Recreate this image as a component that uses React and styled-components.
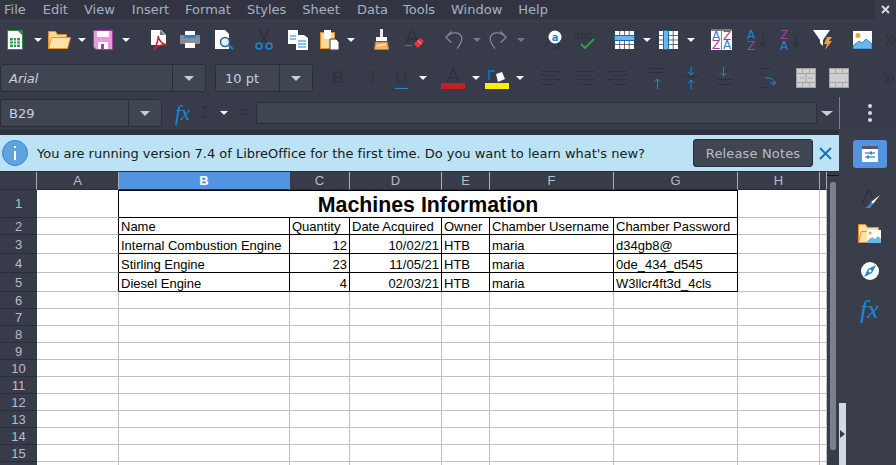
import React from 'react'
import styled, { createGlobalStyle } from 'styled-components'

const GlobalStyle = createGlobalStyle`
    html, body {
        margin: 0;
        padding: 0;
        background: #383c4a;
    }
    body {
        width: 896px;
        height: 465px;
        overflow: hidden;
        font-family: "DejaVu Sans", sans-serif;
    }
`

const Page = styled.div`
    display: flex;
    flex-direction: column;
    width: 896px;
    height: 465px;
    overflow: hidden;
    background: #383c4a;
    color: #c5ccd6;
`

const MenuBar = styled.div`
    display: flex;
    align-items: center;
    height: 19px;
    flex: none;
    background: #323541;
    padding-left: 4px;
`

const MenuItem = styled.span`
    font-size: 13px;
    color: #a3b1c4;
    margin-right: ${p => p.$gap}px;
`

const CloseDoc = styled.div`
    margin-left: auto;
    width: 21px;
    height: 19px;
    display: flex;
    align-items: center;
    justify-content: center;
    background: #383c4a;
`

const Toolbar = styled.div`
    display: flex;
    align-items: center;
    flex: none;
    height: ${p => p.$h}px;
    background: #383c4a;
`

const Tool = styled.span`
    display: flex;
    flex: none;
    align-items: center;
    justify-content: center;
    margin-left: ${p => p.$gap || 0}px;
    width: ${p => p.$w}px;
`

const DropArrow = styled.span`
    flex: none;
    display: block;
    margin-left: ${p => p.$gap || 0}px;
    width: 0;
    height: 0;
    border-left: ${p => (p.$big ? 6 : 4)}px solid transparent;
    border-right: ${p => (p.$big ? 6 : 4)}px solid transparent;
    border-top: ${p => (p.$big ? 5 : 4)}px solid ${p => (p.$dim ? '#747985' : p.$big ? '#c8ccd4' : '#f2f4f7')};
`

const Combo = styled.div`
    display: flex;
    flex: none;
    box-sizing: border-box;
    width: ${p => p.$w}px;
    height: 28px;
    margin-left: ${p => p.$gap || 0}px;
    background: #404552;
    border: 1px solid #2b2e39;
    border-radius: 3px;
`

const ComboText = styled.span`
    flex: 1;
    display: flex;
    align-items: center;
    padding-left: ${p => p.$pad}px;
    font-size: 13px;
    font-style: ${p => (p.$italic ? 'italic' : 'normal')};
    color: #c8d0da;
`

const ComboButton = styled.span`
    display: flex;
    flex: none;
    align-items: center;
    justify-content: center;
    width: 32px;
    border-left: 1px solid #2b2e39;
`

const ComboArrow = styled.span`
    width: 0;
    height: 0;
    border-left: 5px solid transparent;
    border-right: 5px solid transparent;
    border-top: 5px solid #c8ccd4;
`

const DarkGlyph = styled.span`
    flex: none;
    display: block;
    width: ${p => p.$w}px;
    margin-left: ${p => p.$gap || 0}px;
    text-align: center;
    font-family: "Liberation Sans", sans-serif;
    font-size: 17px;
    font-weight: ${p => (p.$bold ? 700 : 400)};
    font-style: ${p => (p.$italic ? 'italic' : 'normal')};
    color: #30333f;
    ${p => p.$under && 'border-bottom: 1px solid #1f86d3;'}
`

const FormulaInput = styled.div`
    flex: none;
    box-sizing: border-box;
    width: 561px;
    height: 22px;
    margin-left: 6px;
    background: #404552;
    border: 1px solid #2b2e39;
    border-radius: 2px;
`

const VSep = styled.span`
    flex: none;
    width: 1px;
    height: 32px;
    margin-left: 6px;
    background: #7d828e;
`

const Kebab = styled.span`
    flex: none;
    display: flex;
    flex-direction: column;
    gap: 3px;
    margin-left: 28px;
    i {
        display: block;
        width: 4px;
        height: 4px;
        border-radius: 50%;
        background: #d3dae3;
    }
`

const Workspace = styled.div`
    flex: 1;
    display: flex;
    min-height: 0;
`

const Main = styled.div`
    flex: none;
    width: 839px;
    display: flex;
    flex-direction: column;
    padding-top: 5px;
    box-sizing: border-box;
    background: #2f323d;
`

const InfoBar = styled.div`
    flex: none;
    display: flex;
    align-items: center;
    height: 36px;
    background: #bce3f5;
    padding-left: 2px;
`

const InfoText = styled.span`
    margin-left: 9px;
    font-size: 13px;
    letter-spacing: -0.01px;
    color: #17191e;
    white-space: nowrap;
`

const ReleaseButton = styled.button`
    box-sizing: border-box;
    width: 120px;
    height: 28px;
    margin-left: auto;
    padding: 0;
    background: #404552;
    border: 1px solid #2b2e39;
    border-radius: 3px;
    color: #b7bdc7;
    font-family: "DejaVu Sans", sans-serif;
    font-size: 13px;
    letter-spacing: 0.15px;
`

const InfoClose = styled.span`
    display: flex;
    justify-content: center;
    width: 25px;
    margin-right: 1px;
`

const SheetArea = styled.div`
    flex: 1;
    display: flex;
    min-height: 0;
    margin-top: 1px;
`

const Sheet = styled.div`
    flex: none;
    display: grid;
    width: 827px;
    grid-template-columns: 37px 82px 171px 60px 92px 48px 124px 124px 82px 7px;
    grid-template-rows: 18px 28px 17px 19px 19px 19px repeat(11, 17px);
    overflow: hidden;
    font-family: "Liberation Sans", sans-serif;
    font-size: 13px;
    background: #fff;
`

const ColHead = styled.div`
    display: flex;
    align-items: center;
    justify-content: center;
    box-sizing: border-box;
    background: ${p => (p.$active ? '#5294e2' : '#383c4a')};
    color: ${p => (p.$active ? '#fff' : '#b6bcc6')};
    font-weight: ${p => (p.$active ? 700 : 400)};
    border-right: 1px solid ${p => (p.$active ? '#5294e2' : '#a9adb6')};
    border-bottom: 1px solid #2b2e39;
`

const RowHead = styled.div`
    display: flex;
    align-items: center;
    justify-content: center;
    box-sizing: border-box;
    background: #383c4a;
    color: #b6bcc6;
    border-bottom: 1px solid #2b2e39;
`

const Cell = styled.div`
    box-sizing: border-box;
    display: flex;
    align-items: flex-end;
    justify-content: ${p => (p.$num ? 'flex-end' : 'flex-start')};
    padding: 0 2px;
    line-height: 14px;
    white-space: nowrap;
    overflow: hidden;
    color: #000;
    border-right: 1px solid ${p => (p.$edge ? '#000' : '#c0c0c0')};
    border-bottom: 1px solid ${p => (p.$table ? '#000' : '#c0c0c0')};
`

const TitleCell = styled(Cell)`
    grid-column: span 6;
    align-items: center;
    justify-content: center;
    font-size: 21.33px;
    line-height: 26px;
    font-weight: 700;
    border-top: 1px solid #000;
    padding: 2px 0 0;
`

const ScrollBar = styled.div`
    flex: none;
    width: 12px;
    display: flex;
    flex-direction: column;
    align-items: center;
    background: #383c4a;
`

const ScrollMark = styled.span`
    display: block;
    width: 12px;
    height: 1px;
    margin-top: 3px;
    background: #14161b;
`

const ScrollThumb = styled.span`
    display: block;
    width: 6px;
    height: 268px;
    margin-top: 6px;
    border-radius: 2px;
    background: #7b808c;
`

const Sidebar = styled.div`
    position: relative;
    flex: 1;
    display: flex;
    flex-direction: column;
    align-items: center;
    padding-top: 10px;
    padding-left: 4px;
    background: #3a3e4b;
`

const SideButton = styled.span`
    display: flex;
    flex: none;
    align-items: center;
    justify-content: center;
    width: 34px;
    height: 28px;
    margin-top: ${p => p.$gap || 0}px;
    border-radius: 3px;
    background: ${p => (p.$active ? '#5294e2' : 'transparent')};
`

const Grip = styled.div`
    position: absolute;
    left: 0;
    top: 273px;
    width: 7px;
    height: 62px;
    display: flex;
    align-items: center;
    justify-content: center;
    background: #d3dae3;
    &::after {
        content: '';
        border-top: 4px solid transparent;
        border-bottom: 4px solid transparent;
        border-left: 5px solid #383c4a;
    }
`

const dark = '#2e313c'
const blue = '#1f86d3'
const purple = '#a33ea1'

const Ico = ({ w, h, children }) => (
    <svg width={w} height={h} viewBox={`0 0 ${w} ${h}`}>{children}</svg>
)

const Lines = ({ w, rows, color = dark }) => (
    <Ico w={w} h={16}>
        {rows.map((r, i) => (
            <rect key={i} x={r[0]} y={r[1]} width={r[2]} height="1" fill={color} />
        ))}
    </Ico>
)

const NewSheet = () => (
    <Ico w={16} h={20}>
        <path d="M.5.5h11l4 4v15H.5z" fill="#fff" stroke="#2e8b3e" />
        <path d="M10 0h6v6z" fill="#2e8b3e" />
        <path d="M3 8h10v9H3z" fill="#2e9a4b" />
        <path d="M3 11h10M3 14h10M6.5 8v9M9.5 8v9" stroke="#fff" />
    </Ico>
)

const OpenFolder = () => (
    <Ico w={23} h={19}>
        <path d="M.5 18V1.5h7l2 3h9v3" fill="#fdd88f" stroke="#ef8f2c" />
        <path d="M.5 18.5l3-11h19l-3 11z" fill="#fde3a7" stroke="#ef8f2c" />
    </Ico>
)

const SaveIcon = () => (
    <Ico w={20} h={20}>
        <path d="M.5.5h19v19H3L.5 17z" fill="#e79bdd" stroke={purple} />
        <rect x="4" y="1" width="12" height="6" fill="#fff" />
        <rect x="5" y="12" width="10" height="7" fill="#fff" />
        <rect x="8" y="14" width="3" height="5" fill={purple} />
    </Ico>
)

const PdfIcon = () => (
    <Ico w={18} h={20}>
        <path d="M1 0h10l5 5v10H1z" fill="#fff" />
        <path d="M10 0l5 5h-5z" fill="#777" />
        <path d="M8 6c1 4 3 8 9 9-5-1-11 1-13 5 2-5 5-9 4-14z" fill="none" stroke="#c0272d" strokeWidth="1.5" />
    </Ico>
)

const PrintIcon = () => (
    <Ico w={20} h={17}>
        <rect x="5" y="0" width="10" height="5" fill="#fff" />
        <rect x="0" y="4" width="20" height="9" rx="1" fill="#8a8d93" />
        <rect x="4" y="4" width="12" height="3" fill="#1f86d3" />
        <rect x="5" y="12" width="10" height="5" fill="#fff" />
    </Ico>
)

const PreviewIcon = () => (
    <Ico w={19} h={20}>
        <path d="M0 0h10l4 4v15H0z" fill="#fff" />
        <circle cx="10" cy="12" r="4.5" fill="#dff0fb" stroke="#2b5f8a" strokeWidth="1.5" />
        <path d="M13 15l5 4" stroke={blue} strokeWidth="2" />
    </Ico>
)

const CutIcon = () => (
    <Ico w={18} h={20}>
        <path d="M4 0l8 13M14 0L6 13" stroke={dark} strokeWidth="1.5" fill="none" />
        <circle cx="4" cy="16" r="3" fill="none" stroke={blue} strokeWidth="1.5" />
        <circle cx="14" cy="16" r="3" fill="none" stroke={blue} strokeWidth="1.5" />
    </Ico>
)

const CopyIcon = () => (
    <Ico w={20} h={20}>
        <path d="M0 0h10v14H0z" fill="#fff" />
        <path d="M2 6h6M2 9h6" stroke={blue} />
        <path d="M8 5h8l4 3v12H8z" fill="#fff" />
        <path d="M10 11h8M10 14h8M10 17h8" stroke={blue} />
    </Ico>
)

const PasteIcon = () => (
    <Ico w={19} h={20}>
        <path d="M.5 2.5h14v16H.5z" fill="#fdd88f" stroke="#ef8f2c" strokeWidth="1" />
        <rect x="4" y="0" width="7" height="4" fill="#fff" />
        <path d="M4 3h7v6H4z" fill="#fff" />
        <path d="M10 9h6l3 3v8h-9z" fill="#fff" stroke="#383c4a" />
    </Ico>
)

const BrushIcon = () => (
    <Ico w={15} h={21}>
        <rect x="6" y="0" width="3" height="9" fill="#e9e9e9" />
        <rect x="2" y="8" width="11" height="4" fill="#fff" />
        <path d="M1.5 13h12l1 7.5H.5z" fill="#f6b26b" stroke="#d9701e" />
        <path d="M3 17l9-2" stroke="#fff" />
    </Ico>
)

const ClearIcon = () => (
    <Ico w={19} h={18}>
        <path d="M1 12L6 0h2l5 12M3 8h8" stroke={dark} strokeWidth="1.5" fill="none" />
        <rect x="0" y="14" width="7" height="1" fill={blue} />
        <path d="M9 13l6-6 4 3-6 7z" fill="#e5383b" />
        <path d="M12.500 9.500l4 3.500" stroke="#ffb3b3" />
    </Ico>
)

const UndoIcon = ({ flip }) => (
    <Ico w={18} h={18}>
        <g transform={flip ? 'translate(18 0) scale(-1 1)' : undefined}>
            <path d="M6.500 .5L.8 6.500l5.700 5M.8 6.500C5 2 11 0 15 3.500c3.500 3 2.500 7-3 14" fill="none" stroke="#878c98" strokeWidth="1.200" />
        </g>
    </Ico>
)

const FindIcon = () => (
    <Ico w={20} h={19}>
        <circle cx="13" cy="7" r="6.5" fill="#fff" />
        <text x="13" y="11" textAnchor="middle" fontFamily="DejaVu Sans" fontSize="10" fontWeight="700" fill={blue}>a</text>
        <path d="M8 11l-7 7M17 14v4h-5" stroke={dark} strokeWidth="1.300" fill="none" />
    </Ico>
)

const SpellIcon = () => (
    <Ico w={23} h={20}>
        <text x="0" y="9" fontFamily="DejaVu Sans" fontSize="10" fill={dark}>abc</text>
        <path d="M7 14l4 4 9-9" fill="none" stroke="#28a745" strokeWidth="1.800" />
    </Ico>
)

const GridIcon = ({ col }) => (
    <Ico w={21} h={20}>
        <rect x="1" y="1" width="19" height="18" fill="#fff" />
        <path d="M1 5.500h19M1 10h19M1 14.500h19M5.700 1v18M10.500 1v18M15.200 1v18" stroke="#2f323d" strokeWidth=".7" />
        {col
            ? <rect x="5.500" y="0.500" width="5" height="19" fill="#6fb6e8" stroke="#0f6cb5" />
            : <rect x="0.500" y="5.500" width="20" height="5" fill="#6fb6e8" stroke="#0f6cb5" />}
    </Ico>
)

const sortText = { fontFamily: 'DejaVu Sans', fontSize: 12, textAnchor: 'middle' }

const SortPage = () => (
    <Ico w={21} h={21}>
        <rect x="0" y="0" width="21" height="2" fill="#7a7a70" />
        <rect x="0" y="2" width="21" height="19" fill="#fff" />
        <rect x="10" y="2" width="1" height="19" fill="#888" />
        <text x="5" y="11" {...sortText} fill={blue}>A</text>
        <text x="5" y="20" {...sortText} fill={purple}>Z</text>
        <text x="16" y="11" {...sortText} fill={purple}>Z</text>
        <text x="16" y="20" {...sortText} fill={blue}>A</text>
    </Ico>
)

const SortIcon = ({ down }) => (
    <Ico w={25} h={22}>
        <text x="6" y="10" {...sortText} fill={down ? purple : blue}>{down ? 'Z' : 'A'}</text>
        <text x="6" y="21" {...sortText} fill={down ? blue : purple}>{down ? 'A' : 'Z'}</text>
        <path d="M18 6v11M15 14l3 3 3-3" stroke={dark} strokeWidth="1.200" fill="none" />
    </Ico>
)

const FilterIcon = () => (
    <Ico w={19} h={20}>
        <path d="M0 0h17L10 10v6l-3-3V10z" fill="#fff" />
        <path d="M14 7h5l-3 4h3l-7 9 2-6h-3z" fill="#f0a03c" />
    </Ico>
)

const ImageIcon = () => (
    <Ico w={19} h={18}>
        <rect x="0" y="0" width="19" height="18" fill="#fff" />
        <circle cx="5" cy="4.500" r="2.500" fill="#f0a03c" />
        <path d="M0 15l6-5 3 2 4-4 6 5v5H0z" fill="#6fb6e8" stroke={blue} />
    </Ico>
)

const More = () => (
    <Ico w={11} h={12}>
        <path d="M1 1l5 5-5 5M6 1l5 5-5 5" fill="none" stroke={dark} strokeWidth="1.400" />
    </Ico>
)

const ColorA = ({ color }) => (
    <Ico w={24} h={21}>
        <path d="M6 15L12 1l6 14M8 10h8" stroke={dark} strokeWidth="1.500" fill="none" />
        <rect x="0" y="15" width="24" height="6" fill={color} />
    </Ico>
)

const Highlight = () => (
    <Ico w={24} h={21}>
        <path d="M4 12V3h6" stroke="#0f6cb5" strokeWidth="2" fill="none" />
        <path d="M11 6l6-2 3 7-7 3z" fill="#fff" />
        <path d="M14 1l3 3" stroke="#383c4a" />
        <rect x="0" y="15" width="24" height="6" fill="#ffee00" />
    </Ico>
)

const ArrowUp = ({ x, y, h }) => <path d={`M${x} ${y}v${h}M${x - 3} ${y + 3}l3 -3 3 3`} stroke={blue} strokeWidth="1" fill="none" />
const ArrowDown = ({ x, y, h }) => <path d={`M${x} ${y}v${h}M${x - 3} ${y + h - 3}l3 3 3 -3`} stroke={blue} strokeWidth="1" fill="none" />

const TableGrey = ({ split }) => (
    <Ico w={20} h={20}>
        <rect x=".5" y=".5" width="19" height="19" fill="#cfcfcf" stroke="#a0a0a0" />
        <path d="M0 5.500h20M0 14.500h20" stroke="#a6a6a6" />
        <path d="M6.500 0v5M13.500 0v5M6.500 15v5M13.500 15v5" stroke="#a6a6a6" />
        {!split && <path d="M4 10h4M12 10h4M10 6v8" stroke="#a6a6a6" />}
    </Ico>
)

const SideProps = () => (
    <Ico w={16} h={16}>
        <rect x="0" y="0" width="16" height="16" fill="#fff" />
        <rect x="0" y="0" width="16" height="3" fill="#55585f" />
        <path d="M3 7h10M3 11h10" stroke="#1a5d96" />
        <rect x="8" y="5.500" width="2" height="3" fill={blue} />
        <rect x="5" y="9.500" width="2" height="3" fill={blue} />
    </Ico>
)

const SideStyles = () => (
    <Ico w={20} h={20}>
        <path d="M1 17L8 2h2l2 7" stroke={dark} strokeWidth="1.500" fill="none" />
        <path d="M20 6L11 13l2 2z" fill="#fff" />
        <path d="M11 13l2 2-3 4H5c3-1 4-3 6-6z" fill="#2f8fdc" />
    </Ico>
)

const SideGallery = () => (
    <Ico w={23} h={19}>
        <path d="M.5 18V.5h7l2 3h11v3" fill="#fde3a7" stroke="#ef8f2c" />
        <path d="M.5 18.500l3-11h19l-3 11z" fill="#fde3a7" stroke="#ef8f2c" />
        <rect x="9" y="6" width="14" height="13" fill="#fff" />
        <circle cx="12" cy="9" r="1.500" fill="#f0a03c" />
        <path d="M9 17l5-4 3 2 3-3 3 3v4H9z" fill="#6fb6e8" />
    </Ico>
)

const SideNavigator = () => (
    <Ico w={18} h={18}>
        <circle cx="9" cy="9" r="9" fill="#fff" />
        <path d="M15 3L11 11 3 15l4-8z" fill={blue} />
        <circle cx="9" cy="9" r="1.500" fill="#fff" />
    </Ico>
)

const Fx = styled.span`
    flex: none;
    font-family: "Liberation Serif", serif;
    font-style: italic;
    font-size: ${p => p.$size}px;
    line-height: 1;
    color: #1f86d3;
    margin-left: ${p => p.$gap || 0}px;
`

const columns = ['A', 'B', 'C', 'D', 'E', 'F', 'G', 'H']

const rows = [
    ['Name', 'Quantity', 'Date Acquired', 'Owner', 'Chamber Username', 'Chamber Password'],
    ['Internal Combustion Engine', '12', '10/02/21', 'HTB', 'maria', 'd34gb8@'],
    ['Stirling Engine', '23', '11/05/21', 'HTB', 'maria', '0de_434_d545'],
    ['Diesel Engine', '4', '02/03/21', 'HTB', 'maria', 'W3llcr4ft3d_4cls'],
]

const emptyRows = [6, 7, 8, 9, 10, 11, 12, 13, 14, 15, 16]

function MainToolbar() {
    return (
        <Toolbar $h={41}>
            <Tool $gap={7} $w={16}><NewSheet /></Tool>
            <DropArrow $gap={11} />
            <Tool $gap={6} $w={23}><OpenFolder /></Tool>
            <DropArrow $gap={7} />
            <Tool $gap={7} $w={20}><SaveIcon /></Tool>
            <DropArrow $gap={9} />
            <Tool $gap={20} $w={18}><PdfIcon /></Tool>
            <Tool $gap={12} $w={20}><PrintIcon /></Tool>
            <Tool $gap={15} $w={19}><PreviewIcon /></Tool>
            <Tool $gap={21} $w={18}><CutIcon /></Tool>
            <Tool $gap={15} $w={20}><CopyIcon /></Tool>
            <Tool $gap={12} $w={19}><PasteIcon /></Tool>
            <DropArrow $gap={8} />
            <Tool $gap={19} $w={15}><BrushIcon /></Tool>
            <Tool $gap={16} $w={19}><ClearIcon /></Tool>
            <Tool $gap={21} $w={18}><UndoIcon /></Tool>
            <DropArrow $gap={10} $dim />
            <Tool $gap={8} $w={18}><UndoIcon flip /></Tool>
            <DropArrow $gap={10} $dim />
            <Tool $gap={17} $w={20}><FindIcon /></Tool>
            <Tool $gap={12} $w={23}><SpellIcon /></Tool>
            <Tool $gap={17} $w={21}><GridIcon /></Tool>
            <DropArrow $gap={8} />
            <Tool $gap={7} $w={21}><GridIcon col /></Tool>
            <DropArrow $gap={8} />
            <Tool $gap={16} $w={21}><SortPage /></Tool>
            <Tool $gap={13} $w={25}><SortIcon /></Tool>
            <Tool $gap={8} $w={25}><SortIcon down /></Tool>
            <Tool $gap={10} $w={19}><FilterIcon /></Tool>
            <Tool $gap={21} $w={19}><ImageIcon /></Tool>
            <Tool $gap={13} $w={11}><More /></Tool>
        </Toolbar>
    )
}

function FormatToolbar() {
    return (
        <Toolbar $h={36}>
            <Combo $w={206}>
                <ComboText $pad={8} $italic>Arial</ComboText>
                <ComboButton><ComboArrow /></ComboButton>
            </Combo>
            <Combo $w={98} $gap={9}>
                <ComboText $pad={9}>10 pt</ComboText>
                <ComboButton><ComboArrow /></ComboButton>
            </Combo>
            <DarkGlyph $gap={17} $w={16} $bold>B</DarkGlyph>
            <DarkGlyph $gap={22} $w={8} $italic>I</DarkGlyph>
            <DarkGlyph $gap={19} $w={13} $under>U</DarkGlyph>
            <DropArrow $gap={11} />
            <Tool $gap={14} $w={24}><ColorA color="#c4201f" /></Tool>
            <DropArrow $gap={7} />
            <Tool $gap={5} $w={24}><Highlight /></Tool>
            <DropArrow $gap={7} />
            <Tool $gap={17} $w={20}><Lines w={20} rows={[[0, 1, 20], [0, 5, 14], [0, 9, 20], [0, 14, 14]]} /></Tool>
            <Tool $gap={14} $w={20}><Lines w={20} rows={[[0, 1, 20], [3, 5, 14], [0, 9, 20], [3, 14, 14]]} /></Tool>
            <Tool $gap={12} $w={20}><Lines w={20} rows={[[0, 1, 20], [6, 5, 14], [0, 9, 20], [6, 14, 14]]} /></Tool>
            <Tool $gap={22} $w={17}>
                <Ico w={17} h={22}><path d="M0 1.500h17M0 5.500h17" stroke={dark} /><ArrowUp x={8.5} y={12} h={10} /></Ico>
            </Tool>
            <Tool $gap={16} $w={18}>
                <Ico w={18} h={22}><path d="M0 9.500h18" stroke={dark} /><ArrowDown x={9} y={0} h={8} /><ArrowUp x={9} y={13} h={9} /></Ico>
            </Tool>
            <Tool $gap={16} $w={17}>
                <Ico w={17} h={22}><path d="M0 12.500h17M0 17.500h17" stroke={dark} /><ArrowDown x={7.5} y={0} h={9} /></Ico>
            </Tool>
            <Tool $gap={25} $w={18}>
                <Ico w={18} h={22}>
                    <path d="M0 1.500h14M0 7.500h6M0 20.500h10" stroke={dark} />
                    <path d="M7 11c6 0 8 0 9 6M12 15l4 3 2-4" stroke={blue} strokeWidth="1" fill="none" />
                </Ico>
            </Tool>
            <Tool $gap={20} $w={20}><TableGrey /></Tool>
            <Tool $gap={13} $w={20}><TableGrey split /></Tool>
            <Tool $gap={34} $w={11}><More /></Tool>
        </Toolbar>
    )
}

function FormulaBar() {
    return (
        <Toolbar $h={34}>
            <Combo $w={162}>
                <ComboText $pad={8}>B29</ComboText>
                <ComboButton><ComboArrow /></ComboButton>
            </Combo>
            <Fx $size={21} $gap={13}>fx</Fx>
            <DarkGlyph $gap={9} $w={13}>Σ</DarkGlyph>
            <DropArrow $gap={8} />
            <DarkGlyph $gap={8} $w={14} $bold>=</DarkGlyph>
            <FormulaInput />
            <DropArrow $gap={4} $big />
            <VSep />
            <Kebab><i /><i /><i /></Kebab>
        </Toolbar>
    )
}

export default function App() {
    return (
        <Page>
            <GlobalStyle />
            <MenuBar>
                <MenuItem $gap={17}>File</MenuItem>
                <MenuItem $gap={16}>Edit</MenuItem>
                <MenuItem $gap={17}>View</MenuItem>
                <MenuItem $gap={16}>Insert</MenuItem>
                <MenuItem $gap={16}>Format</MenuItem>
                <MenuItem $gap={16}>Styles</MenuItem>
                <MenuItem $gap={17}>Sheet</MenuItem>
                <MenuItem $gap={15}>Data</MenuItem>
                <MenuItem $gap={16}>Tools</MenuItem>
                <MenuItem $gap={16}>Window</MenuItem>
                <MenuItem $gap={0}>Help</MenuItem>
                <CloseDoc>
                    <Ico w={9} h={9}><path d="M1 1l7 7M8 1L1 8" stroke="#d3dae3" strokeWidth="2" /></Ico>
                </CloseDoc>
            </MenuBar>
            <MainToolbar />
            <FormatToolbar />
            <FormulaBar />
            <Workspace>
                <Main>
                    <InfoBar>
                        <Ico w={26} h={26}>
                            <circle cx="13" cy="13" r="12.500" fill="#5ea5e0" stroke="#3b82c4" />
                            <rect x="12" y="11" width="2" height="9" fill="#fff" />
                            <rect x="12" y="6" width="2" height="2" fill="#fff" />
                        </Ico>
                        <InfoText>You are running version 7.4 of LibreOffice for the first time. Do you want to learn what's new?</InfoText>
                        <ReleaseButton>Release Notes</ReleaseButton>
                        <InfoClose>
                            <Ico w={13} h={13}><path d="M1 1l11 11M12 1L1 12" stroke="#1c6fb5" strokeWidth="2" /></Ico>
                        </InfoClose>
                    </InfoBar>
                    <SheetArea>
                        <Sheet>
                            <ColHead />
                            {columns.map(c => <ColHead key={c} $active={c === 'B'}>{c}</ColHead>)}
                            <ColHead />

                            <RowHead>1</RowHead>
                            <Cell $edge />
                            <TitleCell $edge $table>Machines Information</TitleCell>
                            <Cell />
                            <Cell />

                            {rows.map((row, i) => (
                                <React.Fragment key={row[0]}>
                                    <RowHead>{i + 2}</RowHead>
                                    <Cell $edge />
                                    {row.map((text, j) => (
                                        <Cell key={j} $edge $table $num={i > 0 && (j === 1 || j === 2)}>{text}</Cell>
                                    ))}
                                    <Cell />
                                    <Cell />
                                </React.Fragment>
                            ))}

                            {emptyRows.map(n => (
                                <React.Fragment key={n}>
                                    <RowHead>{n}</RowHead>
                                    {columns.map(c => <Cell key={c} />)}
                                    <Cell />
                                </React.Fragment>
                            ))}
                        </Sheet>
                        <ScrollBar>
                            <ScrollMark />
                            <ScrollThumb />
                        </ScrollBar>
                    </SheetArea>
                </Main>
                <Sidebar>
                    <SideButton $active><SideProps /></SideButton>
                    <SideButton $gap={17}><SideStyles /></SideButton>
                    <SideButton $gap={6}><SideGallery /></SideButton>
                    <SideButton $gap={10}><SideNavigator /></SideButton>
                    <SideButton $gap={11}><Fx $size={26}>fx</Fx></SideButton>
                    <Grip />
                </Sidebar>
            </Workspace>
        </Page>
    )
}
